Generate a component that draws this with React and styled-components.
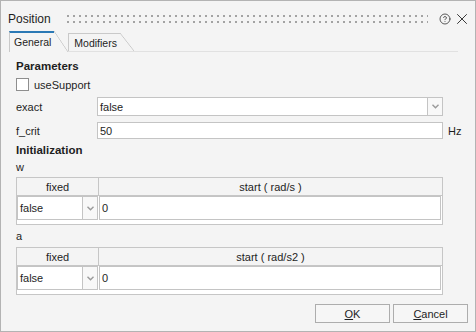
import styled, { createGlobalStyle } from "styled-components";
import { CircleHelp, X } from "lucide-react";

const GlobalStyle = createGlobalStyle`
  html, body {
    margin: 0;
    padding: 0;
    background: #f4f4f4;
  }
  * {
    box-sizing: border-box;
  }
  body {
    font-family: "Liberation Sans", Arial, sans-serif;
    font-size: 11px;
    color: #1e1e1e;
  }
`;

const Dialog = styled.div`
  width: 476px;
  height: 332px;
  border: 1px solid #b3b3b3;
  background: #f4f4f4;
  display: flex;
  flex-direction: column;
`;

const TitleBar = styled.div`
  height: 30px;
  display: flex;
  align-items: flex-start;
  padding: 0 4px 0 7px;
  color: #333;
`;

const Title = styled.span`
  font-size: 12px;
  line-height: 14px;
  margin-top: 11px;
  color: #1e1e1e;
`;

const Grip = styled.div`
  flex: 1;
  height: 8px;
  margin: 14px 11px 0 16px;
  background-image: conic-gradient(from 270deg at 2px 2px, #a3a3a3 25%, transparent 0);
  background-size: 6px 6px;
`;

const IconSlot = styled.span`
  display: flex;
  margin-top: ${({ $top }) => $top}px;
  margin-left: ${({ $left }) => $left || 0}px;
`;

const TabStrip = styled.div`
  height: 21px;
  margin: 0 17px 0 8px;
  display: flex;
  align-items: flex-end;
  border-bottom: 1px solid #e1e1e1;
`;

const Tab = styled.div`
  position: relative;
  display: flex;
  align-items: center;
  height: ${({ $active }) => ($active ? 21 : 18)}px;
  margin-bottom: ${({ $active }) => ($active ? -1 : 0)}px;
  margin-left: ${({ $active }) => ($active ? 0 : 14)}px;
  padding: 0 3px ${({ $active }) => ($active ? 2 : 0)}px ${({ $active }) => ($active ? 4 : 5)}px;
  border-left: 1px solid #c9c9c9;
  border-top: ${({ $active }) => ($active ? "2px solid #2b79b5" : "1px solid #c9c9c9")};
  background: #f4f4f4;
  font-size: 10.5px;
  z-index: ${({ $active }) => ($active ? 1 : 0)};

  &::after {
    content: "";
    position: absolute;
    left: 100%;
    top: ${({ $active }) => ($active ? -2 : -1)}px;
    bottom: ${({ $active }) => ($active ? 0 : 0)}px;
    width: 14px;
    background: linear-gradient(
      to top right,
      ${({ $active }) => ($active ? "#f4f4f4" : "transparent")} calc(50% - 0.7px),
      #c9c9c9 50%,
      transparent calc(50% + 0.7px)
    );
  }
`;

const Panel = styled.div`
  flex: 1;
  display: flex;
  flex-direction: column;
  padding: 6px 0 0 15px;
`;

const SectionTitle = styled.div`
  font-weight: bold;
  font-size: 11.5px;
  line-height: 16px;
  margin-top: ${({ $top }) => $top || 0}px;
`;

const SmallLabel = styled.div`
  line-height: 16px;
  margin-top: ${({ $top }) => $top || 0}px;
`;

const CheckRow = styled.label`
  display: flex;
  align-items: center;
  gap: 5px;
  height: 13px;
  margin-top: 4px;
`;

const CheckBox = styled.span`
  width: 13px;
  height: 13px;
  border: 1px solid #8e8e8e;
  background: #fff;
`;

const FieldRow = styled.div`
  display: flex;
  align-items: center;
  margin-top: ${({ $top }) => $top}px;
`;

const FieldLabel = styled.span`
  width: 81px;
`;

const Combo = styled.div`
  display: flex;
  width: ${({ $width }) => $width}px;
  height: ${({ $height }) => $height}px;
`;

const ComboText = styled.div`
  flex: 1;
  display: flex;
  align-items: center;
  padding-left: 2px;
  background: #fff;
  border: 1px solid #c4c4c4;
`;

const ComboButton = styled.div`
  width: 15px;
  display: flex;
  align-items: center;
  justify-content: center;
  background: #f8f8f8;
  border: 1px solid #c4c4c4;
  border-left: none;
`;

const TextInput = styled.div`
  display: flex;
  align-items: center;
  width: ${({ $width }) => ($width ? `${$width}px` : "auto")};
  flex: ${({ $width }) => ($width ? "none" : 1)};
  height: ${({ $height }) => $height}px;
  padding-left: 2px;
  background: #fff;
  border: 1px solid #c4c4c4;
`;

const Unit = styled.span`
  margin-left: 5px;
`;

const Table = styled.div`
  width: 427px;
  margin-top: ${({ $top }) => $top}px;
  border: 1px solid #c6c6c6;
  background: #fff;
  padding-bottom: 4px;
`;

const HeaderRow = styled.div`
  display: grid;
  grid-template-columns: 82px 1fr;
  height: 18px;
  background: #f4f4f4;
  border-bottom: 1px solid #c6c6c6;
`;

const HeaderCell = styled.div`
  display: flex;
  align-items: center;
  justify-content: center;
  border-right: ${({ $divider }) => ($divider ? "1px solid #c6c6c6" : "none")};
`;

const DataRow = styled.div`
  display: flex;
  gap: 1px;
  height: 24px;
  padding-right: 1px;
`;

const Footer = styled.div`
  margin-top: auto;
  display: flex;
  justify-content: flex-end;
  gap: 3px;
  padding: 0 7px 8px 0;
`;

const Button = styled.button`
  width: 75px;
  height: 19px;
  padding: 0;
  font-family: inherit;
  font-size: 11px;
  color: #1e1e1e;
  background: #f6f6f6;
  border: 1px solid #adadad;
`;

function Chevron() {
  return (
    <svg width="7" height="5" viewBox="0 0 7 5">
      <polyline points="0.5,0.8 3.5,3.8 6.5,0.8" fill="none" stroke="#9a9a9a" strokeWidth="1.4" />
    </svg>
  );
}

function Dropdown({ value, width, height }) {
  return (
    <Combo $width={width} $height={height}>
      <ComboText>{value}</ComboText>
      <ComboButton>
        <Chevron />
      </ComboButton>
    </Combo>
  );
}

function StartTable({ top, unit }) {
  return (
    <Table $top={top}>
      <HeaderRow>
        <HeaderCell $divider>fixed</HeaderCell>
        <HeaderCell>start ( {unit} )</HeaderCell>
      </HeaderRow>
      <DataRow>
        <Dropdown value="false" width={81} height={24} />
        <TextInput $height={24}>0</TextInput>
      </DataRow>
    </Table>
  );
}

export default function App() {
  return (
    <>
      <GlobalStyle />
      <Dialog>
        <TitleBar>
          <Title>Position</Title>
          <Grip />
          <IconSlot $top={12}>
            <CircleHelp size={12} strokeWidth={1.6} />
          </IconSlot>
          <IconSlot $top={9} $left={2}>
            <X size={18} strokeWidth={1.3} />
          </IconSlot>
        </TitleBar>
        <TabStrip>
          <Tab $active>General</Tab>
          <Tab>Modifiers</Tab>
        </TabStrip>
        <Panel>
          <SectionTitle>Parameters</SectionTitle>
          <CheckRow>
            <CheckBox />
            useSupport
          </CheckRow>
          <FieldRow $top={6}>
            <FieldLabel>exact</FieldLabel>
            <Dropdown value="false" width={346} height={19} />
          </FieldRow>
          <FieldRow $top={6}>
            <FieldLabel>f_crit</FieldLabel>
            <TextInput $width={346} $height={17}>50</TextInput>
            <Unit>Hz</Unit>
          </FieldRow>
          <SectionTitle $top={3}>Initialization</SectionTitle>
          <SmallLabel $top={1}>w</SmallLabel>
          <StartTable top={2} unit="rad/s" />
          <SmallLabel $top={3}>a</SmallLabel>
          <StartTable top={3} unit="rad/s2" />
        </Panel>
        <Footer>
          <Button>
            <u>O</u>K
          </Button>
          <Button>
            <u>C</u>ancel
          </Button>
        </Footer>
      </Dialog>
    </>
  );
}
